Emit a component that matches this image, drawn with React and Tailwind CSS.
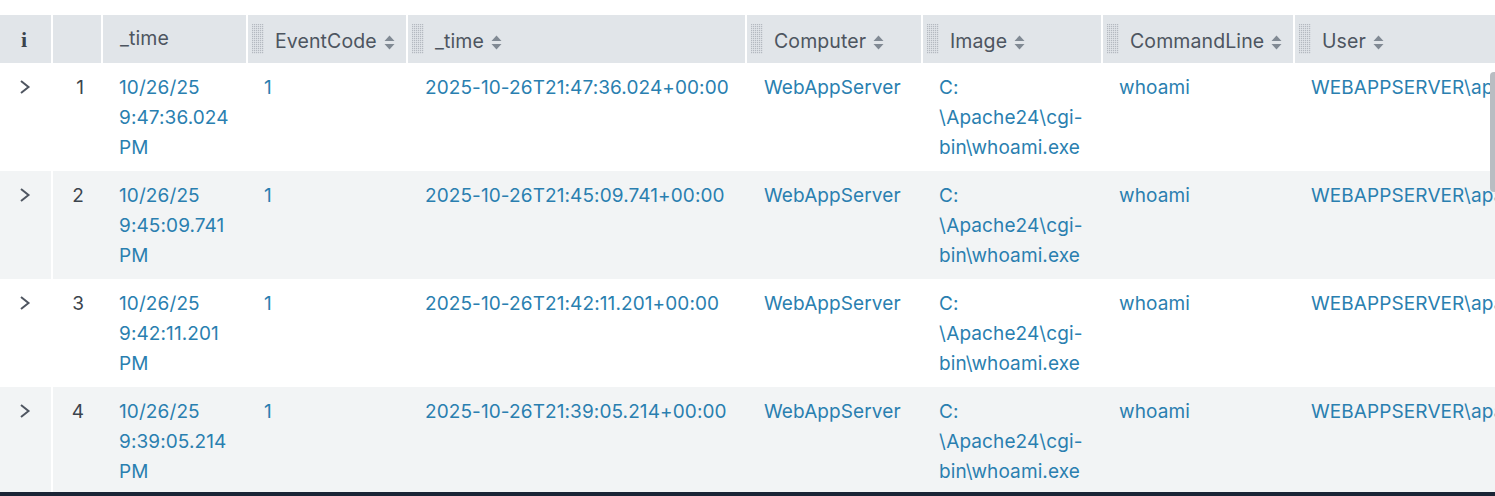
import React from "react";

const rows = [
  { n: 1, date: "9:47:36.024", iso: "2025-10-26T21:47:36.024+00:00" },
  { n: 2, date: "9:45:09.741", iso: "2025-10-26T21:45:09.741+00:00" },
  { n: 3, date: "9:42:11.201", iso: "2025-10-26T21:42:11.201+00:00" },
  { n: 4, date: "9:39:05.214", iso: "2025-10-26T21:39:05.214+00:00" },
];

const Grip = () => (
  <svg width="12" height="30" className="shrink-0 text-[#b4b9c0]">
    <defs>
      <pattern id="grip" width="2" height="2" patternUnits="userSpaceOnUse">
        <rect width="1.2" height="1.2" fill="currentColor" />
      </pattern>
    </defs>
    <rect width="12" height="30" fill="url(#grip)" />
  </svg>
);

const SortIcon = () => (
  <svg width="11" height="15" viewBox="0 0 11 15" className="shrink-0 mt-[1px]">
    <path d="M5.5 0.5 L10.5 6 H0.5 Z M0.5 9 H10.5 L5.5 14.5 Z" fill="#818a94" />
  </svg>
);

const Chevron = () => (
  <svg width="12" height="16" viewBox="0 0 12 16" fill="none">
    <path d="M2 2 L9.5 8 L2 14" stroke="#4f5661" strokeWidth="2" />
  </svg>
);

const SortHead = ({ label }) => (
  <th className="bg-[#e1e5e9] p-0 font-normal border-l-2 border-white">
    <div className="flex items-center pl-[4px] gap-[11px] h-12 text-[#4d5560] text-[19.5px]">
      <Grip />
      <span className="flex items-center gap-[7px] pt-[6px]">
        {label}
        <SortIcon />
      </span>
    </div>
  </th>
);

const Cell = ({ children, className = "" }) => (
  <td className={`align-top pt-[10px] pl-[18px] pr-[8px] text-[#2a7fb0] leading-[30px] ${className}`}>{children}</td>
);

export default function App() {
  return (
    <div className="h-[496px] w-[1495px] overflow-hidden bg-white flex flex-col relative font-['Inter',sans-serif] text-[19px] tracking-[0.1px]">
      <div className="flex-1 pt-[15px] overflow-hidden">
        <table className="table-fixed border-collapse w-[1620px]">
          <colgroup>
            <col className="w-[52px]" />
            <col className="w-[50px]" />
            <col className="w-[145px]" />
            <col className="w-[160px]" />
            <col className="w-[339px]" />
            <col className="w-[176px]" />
            <col className="w-[180px]" />
            <col className="w-[192px]" />
            <col className="w-[326px]" />
          </colgroup>
          <thead>
            <tr>
              <th className="bg-[#e1e5e9] h-12 p-0 text-center font-['Liberation_Serif',serif] font-bold text-[22px] text-[#3c444d] pr-[3px]">i</th>
              <th className="bg-[#e1e5e9] p-0 border-l-2 border-white"></th>
              <th className="bg-[#e1e5e9] p-0 pl-[17px] font-normal text-left text-[19.5px] text-[#4d5560] border-l-2 border-white">_time</th>
              <SortHead label="EventCode" />
              <SortHead label="_time" />
              <SortHead label="Computer" />
              <SortHead label="Image" />
              <SortHead label="CommandLine" />
              <SortHead label="User" />
            </tr>
          </thead>
          <tbody>
            {rows.map((r) => (
              <tr key={r.n} className={`h-[108px] ${r.n % 2 === 0 ? "bg-[#f2f4f5]" : "bg-white"}`}>
                <td className="align-top p-0 pt-[16px] pl-[19px]">
                  <Chevron />
                </td>
                <td className="align-top pt-[10px] pr-[18px] text-right leading-[30px] text-[#3c444d] border-l-2 border-white">{r.n}</td>
                <Cell className="!pl-[17px]">
                  10/26/25
                  <br />
                  {r.date}
                  <br />
                  PM
                </Cell>
                <Cell className="!pl-[17px]">1</Cell>
                <Cell className="whitespace-nowrap">{r.iso}</Cell>
                <Cell>WebAppServer</Cell>
                <Cell className="!pl-[17px]">
                  C:
                  <br />
                  \Apache24\cgi-
                  <br />
                  bin\whoami.exe
                </Cell>
                <Cell className="!pl-[17px]">whoami</Cell>
                <Cell className="!pl-[17px] whitespace-nowrap">WEBAPPSERVER\apache</Cell>
              </tr>
            ))}
          </tbody>
        </table>
      </div>
      <div className="absolute right-0 top-[72px] w-[5px] h-[120px] bg-[#b9bdc2] rounded-l-sm"></div>
      <div className="h-[4px] bg-[#1a2435] shrink-0 relative"></div>
    </div>
  );
}
